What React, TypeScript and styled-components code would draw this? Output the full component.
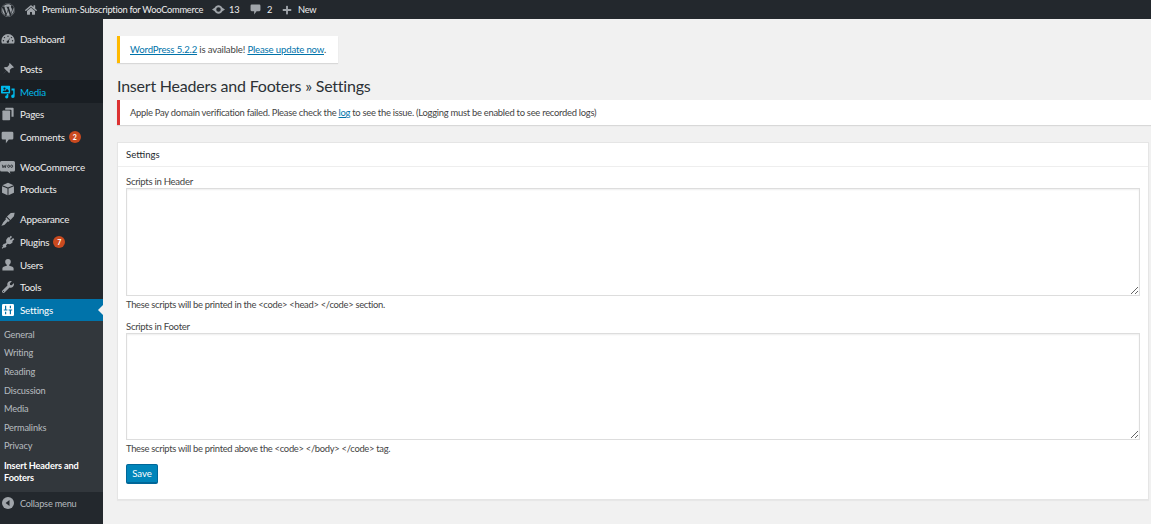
import React from "react";
import styled, { createGlobalStyle } from "styled-components";
import { FaWordpress, FaHome, FaPlus, FaWrench } from "react-icons/fa";

const Global = createGlobalStyle`
  html, body { margin: 0; padding: 0; background: #f1f1f1; height: 100%; overflow: hidden; }
  body { font-family: "Lato", "Open Sans", sans-serif; font-size: 10px; color: #444; }
  * { box-sizing: border-box; }
`;

const Page = styled.div`display:flex;flex-direction:column;width:1151px;height:524px;overflow:hidden;`;
const AdminBar = styled.header`
  height:19px;flex:none;background:#23282d;color:#eee;display:flex;align-items:center;
  font-size:9.3px;letter-spacing:-.25px;white-space:nowrap;
`;
const BarItem = styled.span<{ $w: number; $gap?: number }>`
  display:flex;align-items:center;gap:${p => p.$gap ?? 5}px;width:${p => p.$w}px;flex:none;
  svg { color:#a0a5aa; flex:none; }
`;
const Body = styled.div`flex:1;display:flex;min-height:0;`;
const Sidebar = styled.nav`
  width:103px;flex:none;background:#23282d;padding-top:9px;display:flex;flex-direction:column;
`;
const MenuItem = styled.div<{ $state?: "current" | "open"; $gap?: number }>`
  height:22.7px;flex:none;display:flex;align-items:center;position:relative;
  margin-bottom:${p => p.$gap ?? 0}px;font-size:9.8px;letter-spacing:-.2px;
  color:${p => p.$state === "current" ? "#00b9eb" : "#eee"};
  background:${p => p.$state === "current" ? "#191e23" : p.$state === "open" ? "#0073aa" : "transparent"};
  ${p => p.$state === "open" ? "color:#fff;" : ""}
`;
const MenuIcon = styled.span<{ $tone?: string }>`
  width:20px;flex:none;display:flex;justify-content:center;padding-right:5px;
  color:${p => p.$tone ?? "#a0a5aa"};
`;
const Pointer = styled.i`
  position:absolute;right:0;top:50%;margin-top:-5px;border:5px solid transparent;border-right-color:#f1f1f1;border-left:0;
`;
const Badge = styled.span`
  width:12px;height:12px;border-radius:50%;background:#ca4a1f;color:#fff;font-size:7px;font-weight:700;letter-spacing:0;
  display:inline-flex;align-items:center;justify-content:center;margin-left:4px;
`;
const SubMenu = styled.div`
  background:#32373c;padding:4px 0 8px;display:flex;flex-direction:column;flex:none;
`;
const SubItem = styled.div<{ $active?: boolean }>`
  padding:0 4px;min-height:18.6px;line-height:12px;display:flex;align-items:center;font-size:9.2px;letter-spacing:-.15px;
  color:${p => p.$active ? "#fff" : "rgba(240,245,250,.7)"};font-weight:${p => p.$active ? 700 : 400};
  margin-top:${p => p.$active ? 4 : 0}px;
`;
const Collapse = styled.div`
  display:flex;align-items:center;height:23px;color:#b4b9be;font-size:9.2px;letter-spacing:-.2px;
`;
const Main = styled.main`flex:1;min-width:0;padding:17px 2px 0 14px;display:flex;flex-direction:column;`;
const UpdateNag = styled.div`
  align-self:flex-start;background:#fff;border-left:3px solid #ffb900;box-shadow:0 1px 1px rgba(0,0,0,.1);
  height:27px;width:221px;padding:0 10px;display:flex;align-items:center;font-size:9.6px;letter-spacing:-.16px;
  color:#444;white-space:pre;
`;
const Link = styled.a`color:#0073aa;text-decoration:underline;`;
const Title = styled.h1`
  margin:11px 0 0;font-size:16px;line-height:24px;font-weight:400;color:#2c3136;letter-spacing:-.22px;
`;
const ErrorNotice = styled.div`
  background:#fff;border-left:3px solid #dc3232;box-shadow:0 1px 1px rgba(0,0,0,.1);height:25px;margin:2px -2px 0 0;
  padding:0 10px;display:flex;align-items:center;font-size:9.4px;letter-spacing:-.26px;color:#444;white-space:pre;
`;
const Card = styled.section`
  margin-top:17px;background:#fff;border:1px solid #e5e5e5;box-shadow:0 1px 1px rgba(0,0,0,.04);height:358px;
`;
const CardHeader = styled.h2`
  margin:0;height:24px;display:flex;align-items:center;padding:0 8px;border-bottom:1px solid #eee;
  font-size:9.6px;font-weight:400;color:#23282d;
`;
const Form = styled.div`padding:9px 8px 0;display:flex;flex-direction:column;`;
const Label = styled.label`font-size:9.6px;letter-spacing:-.3px;line-height:12px;color:#444;height:12px;`;
const Area = styled.textarea`
  width:100%;height:107.5px;flex:none;display:block;border:1px solid #ddd;background:#fff;box-shadow:inset 0 1px 2px rgba(0,0,0,.07);
  margin:0;padding:2px;resize:both;outline:none;
`;
const Hint = styled.p`margin:3px 0 0;font-size:9.4px;letter-spacing:-.29px;line-height:12px;color:#444;height:12px;white-space:pre;`;
const Spacer = styled.div`height:10px;flex:none;`;
const Save = styled.button`
  align-self:flex-start;margin-top:9px;width:32px;height:20px;background:#0085ba;border:1px solid #006799;border-bottom-width:2px;
  border-radius:2px;color:#fff;font:9.6px "Lato",sans-serif;padding:0;
`;

const Svg: React.FC<{ w?: number; h?: number; children: React.ReactNode }> = ({ w = 13, h = 13, children }) => (
  <svg width={w} height={h} viewBox="0 0 20 20" fill="currentColor">{children}</svg>
);

const UpdateIcon = () => (
  <Svg w={13} h={13}>
    <path fillRule="evenodd" d="M10 3.500c2.600 0 4.800 1.500 5.900 3.700L20 10l-4.100 2.800c-1.100 2.200-3.300 3.700-5.900 3.700s-4.800-1.500-5.900-3.700L0 10l4.100-2.800C5.200 5 7.400 3.500 10 3.500zM10 6.500a3.500 3.500 0 1 0 0 7 3.500 3.500 0 0 0 0-7z" />
  </Svg>
);
const GaugeIcon = () => (
  <Svg w={14} h={14}>
    <path fillRule="evenodd" d="M10 3a9.500 9.500 0 0 0-9.500 9.500c0 1.500.3 2.700.9 3.800h17.200c.6-1.100.9-2.300.9-3.800A9.500 9.500 0 0 0 10 3zM10 5a1 1 0 1 1 0 2 1 1 0 0 1 0-2zM5 7a1 1 0 1 1 0 2 1 1 0 0 1 0-2zM15 7a1 1 0 1 1 0 2 1 1 0 0 1 0-2zM3.500 11.500a1 1 0 1 1 0 2 1 1 0 0 1 0-2zM16.500 11.500a1 1 0 1 1 0 2 1 1 0 0 1 0-2zM13.500 8l-2.300 4.600a1.800 1.800 0 1 1-1.300-.6z" />
  </Svg>
);
const PinIcon = () => (
  <Svg w={14} h={14}>
    <path d="M12.500 1.500l6 6-1.600 1.100-1-.5-3.500 3.300c.7 1.700.4 3.300-.7 4.600L8 12.300 1.500 18.500 7.700 12 4 8.300c1.300-1.100 2.900-1.400 4.600-.7L11.900 4l-.5-1z" />
  </Svg>
);
const MediaIcon = () => (
  <Svg w={14} h={14}>
    <path fillRule="evenodd" d="M1 1h11a1 1 0 0 1 1 1v9a1 1 0 0 1-1 1H1a1 1 0 0 1-1-1V2a1 1 0 0 1 1-1zM5 3.500a1.600 1.600 0 1 0 0 3.200 1.600 1.600 0 0 0 0-3.200zM2 10h9V8L8.500 5.500 6 8.500 4.500 7.500z" />
    <path d="M15 5h4.500v11a2.500 2.500 0 1 1-2-2.400V8H15zM8 13h2.500v3.800a2.300 2.300 0 1 1-2-2.200z" />
  </Svg>
);
const PagesIcon = () => (
  <Svg w={14} h={14}>
    <path d="M7 1h10a1 1 0 0 1 1 1v12h-3V5a1 1 0 0 0-1-1H6V2a1 1 0 0 1 1-1z" />
    <path d="M3 5h9a1 1 0 0 1 1 1v12a1 1 0 0 1-1 1H3a1 1 0 0 1-1-1V6a1 1 0 0 1 1-1z" />
  </Svg>
);
const BubbleIcon: React.FC<{ size?: number }> = ({ size = 13 }) => (
  <Svg w={size} h={size}>
    <path d="M3 1h14a2 2 0 0 1 2 2v8a2 2 0 0 1-2 2h-5l-4.500 6v-6H3a2 2 0 0 1-2-2V3a2 2 0 0 1 2-2z" />
  </Svg>
);
const WooIcon = () => (
  <svg width="15" height="14" viewBox="0 0 20 18">
    <path fill="#a0a5aa" d="M2 1h16a2 2 0 0 1 2 2v10a2 2 0 0 1-2 2h-5l1 3-4-3H2a2 2 0 0 1-2-2V3a2 2 0 0 1 2-2z" />
    <path fill="none" stroke="#23282d" strokeWidth="1.100" d="M3 6l1 4 1.500-3L7 10l1-4M10.200 8a1.300 1.600 0 1 0 2.600 0a1.300 1.600 0 1 0-2.600 0M14.200 8a1.300 1.600 0 1 0 2.600 0a1.300 1.600 0 1 0-2.600 0" />
  </svg>
);
const BoxIcon = () => (
  <Svg w={14} h={14}>
    <path d="M10 1l8 3.500-8 3.300-8-3.300zM1.500 6l7.800 3.200V19l-7.800-3.500zM18.500 6l-7.800 3.200V19l7.800-3.500z" />
  </Svg>
);
const BrushIcon = () => (
  <Svg w={14} h={14}>
    <path d="M19.500 1l-1 5-5 5.500-5-5 5.500-5zM7.500 7.500l5 5-1.500 1.500-1.500-.5L5.500 18c-1 1-3 1.500-5 1.500 1-1.500 1.500-2.500 2.500-4.500l4-4.500-.5-1.500z" />
  </Svg>
);
const PlugIcon = () => (
  <Svg w={14} h={14}>
    <path d="M14 1l1.800 1.800-3 3 1.400 1.400 3-3L19 6l-3 3 1 1-1.500 1.500c-1.800 1.800-4.200 2.200-6 1.100L7 15l1 1-2.500 2.500-1-1-2.500 2-1-1 2-2.500-1-1L4.500 12l1 1 2.400-2.500c-1.100-1.800-.7-4.200 1.100-6L10.500 3l1 1z" />
  </Svg>
);
const UserIcon = () => (
  <Svg w={14} h={14}>
    <path d="M10 1.500a4 4 0 0 1 4 4c0 1.800-1 3.500-2.300 4.200v1.300c3.800.5 6.300 2 6.300 3.700V18H2v-3.300c0-1.700 2.500-3.200 6.300-3.700V9.700C7 9 6 7.300 6 5.500a4 4 0 0 1 4-4z" />
  </Svg>
);
const SettingsIcon = () => (
  <svg width="12" height="12" viewBox="0 0 20 20">
    <rect width="20" height="20" rx="2" fill="#fff" />
    <path fill="#0073aa" d="M5 3h2v6h2v2H3V9h2zM5 13h2v4H5zM13 3h2v4h-2zM11 9h6v2h-2v6h-2v-6h-2z" />
  </svg>
);
const CollapseIcon = () => (
  <svg width="12" height="12" viewBox="0 0 20 20">
    <circle cx="10" cy="10" r="10" fill="#a0a5aa" />
    <path fill="#23282d" d="M12.500 5v10L6 10z" />
  </svg>
);

type Item = { label: string; icon: React.ReactNode; badge?: string; gap?: number; state?: "current" | "open" };
const items: Item[] = [
  { label: "Dashboard", icon: <GaugeIcon />, gap: 7 },
  { label: "Posts", icon: <PinIcon /> },
  { label: "Media", icon: <MediaIcon />, state: "current" },
  { label: "Pages", icon: <PagesIcon /> },
  { label: "Comments", icon: <BubbleIcon />, badge: "2", gap: 7 },
  { label: "WooCommerce", icon: <WooIcon /> },
  { label: "Products", icon: <BoxIcon />, gap: 7.2 },
  { label: "Appearance", icon: <BrushIcon /> },
  { label: "Plugins", icon: <PlugIcon />, badge: "7" },
  { label: "Users", icon: <UserIcon /> },
  { label: "Tools", icon: <FaWrench size={12} /> },
  { label: "Settings", icon: <SettingsIcon />, state: "open" },
];
const subs = ["General", "Writing", "Reading", "Discussion", "Media", "Permalinks", "Privacy"];

export default function App() {
  return (
    <Page>
      <Global />
      <AdminBar>
        <BarItem $w={25} style={{ paddingLeft: 1 }}><FaWordpress size={14} /></BarItem>
        <BarItem $w={187}><FaHome size={12} />Premium-Subscription for WooCommerce</BarItem>
        <BarItem $w={38} $gap={4}><UpdateIcon />13</BarItem>
        <BarItem $w={32} $gap={6}><BubbleIcon size={11} />2</BarItem>
        <BarItem $w={50} $gap={6}><FaPlus size={10} />New</BarItem>
      </AdminBar>
      <Body>
        <Sidebar>
          {items.map(it => (
            <MenuItem key={it.label} $state={it.state} $gap={it.gap}>
              <MenuIcon $tone={it.state === "current" ? "#00b9eb" : undefined}>{it.icon}</MenuIcon>
              {it.label}
              {it.badge && <Badge>{it.badge}</Badge>}
              {it.state === "open" && <Pointer />}
            </MenuItem>
          ))}
          <SubMenu>
            {subs.map(s => <SubItem key={s}>{s}</SubItem>)}
            <SubItem $active>Insert Headers and Footers</SubItem>
          </SubMenu>
          <Collapse><MenuIcon><CollapseIcon /></MenuIcon>Collapse menu</Collapse>
        </Sidebar>
        <Main>
          <UpdateNag>
            <span><Link>WordPress 5.2.2</Link> is available! <Link>Please update now</Link>.</span>
          </UpdateNag>
          <Title>Insert Headers and Footers » Settings</Title>
          <ErrorNotice>
            <span>Apple Pay domain verification failed. Please check the <Link>log</Link> to see the issue. (Logging must be enabled to see recorded logs)</span>
          </ErrorNotice>
          <Card>
            <CardHeader>Settings</CardHeader>
            <Form>
              <Label>Scripts in Header</Label>
              <Area />
              <Hint>These scripts will be printed in the &lt;code&gt; &lt;head&gt; &lt;/code&gt; section.</Hint>
              <Spacer />
              <Label>Scripts in Footer</Label>
              <Area />
              <Hint>These scripts will be printed above the &lt;code&gt; &lt;/body&gt; &lt;/code&gt; tag.</Hint>
              <Save>Save</Save>
            </Form>
          </Card>
        </Main>
      </Body>
    </Page>
  );
}
